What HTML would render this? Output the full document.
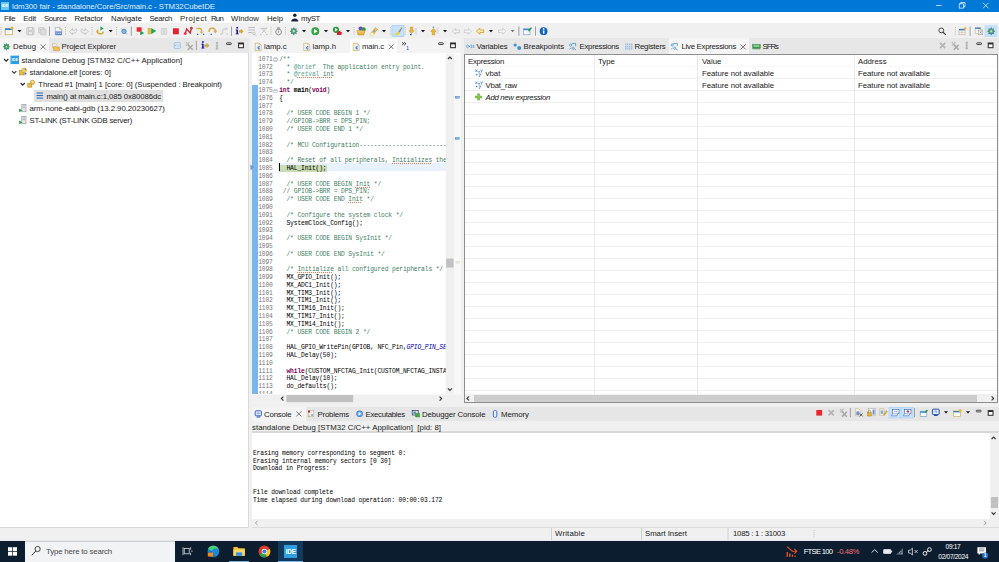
<!DOCTYPE html>
<html><head><meta charset="utf-8"><title>STM32CubeIDE</title>
<style>
*{box-sizing:border-box;margin:0;padding:0}
html,body{width:999px;height:562px;overflow:hidden;background:#f0f0f0;font-family:"Liberation Sans",sans-serif;font-size:7.8px;color:#1a1a1a}
.a{position:absolute;white-space:pre}
.t{position:absolute;white-space:pre;line-height:10px;height:10px}
#title{left:0;top:0;width:999px;height:12px;background:#0078d7}
#menu{left:0;top:12px;width:999px;height:11px;background:#fff}
#menu .t{top:1.6px;font-size:7.8px}
#tool{left:0;top:23px;width:999px;height:15px;background:#f0f0f0}
.tabbar{background:#e7e7e7;height:15.6px}
.tab{position:absolute;top:0;height:15px;background:#f6f6f6}
.panel{background:#fff;border:1px solid #b9b9b9}
.mono{font-family:"Liberation Mono",monospace}

#code{white-space:normal;font-family:"Liberation Mono",monospace;font-size:6.3px;letter-spacing:-0.14px;color:#000}
.ln{position:relative;height:7.81px;line-height:7.81px;white-space:pre}
.no{position:absolute;left:6.5px;color:#787878}
.cd{position:absolute;left:27.5px}
.fold{position:absolute;left:21.5px;top:1.7px;width:4.6px;height:4.6px;background:#c4ccd8;border-radius:2.3px}.fold:after{content:"";position:absolute;left:1px;top:1.9px;width:2.6px;height:0.8px;background:#f8f8ff}
.c{color:#3f7f5f}.ct{color:#5f9f8f}.k{color:#7f0055;font-weight:bold}.b{font-weight:bold}.e{color:#0000c0;font-style:italic}
.ip{background:#c9dcb3}
.sq{text-decoration:underline dotted #f07850;text-decoration-thickness:0.8px;text-underline-offset:0.7px}
#ctx{font-family:"Liberation Mono",monospace;font-size:6.3px;letter-spacing:-0.14px;line-height:7.81px;color:#000}
</style></head><body>
<!-- TITLE BAR -->
<div class="a" id="title">
 <div class="a" style="left:1px;top:2px;width:8px;height:8px;background:#6cc4f0;color:#fff;font-size:4px;line-height:8px;text-align:center;font-weight:bold">IDE</div>
 <div class="t" style="left:12.0px;top:1.9px;color:#e2eefb;letter-spacing:-0.044px">ldm300 fair - standalone/Core/Src/main.c - STM32CubeIDE</div>
</div>
<!-- MENU -->
<div class="a" id="menu">
 <div class="t" style="left:4.0px;letter-spacing:-0.320px">File</div>
 <div class="t" style="left:23.2px;letter-spacing:-0.159px">Edit</div>
 <div class="t" style="left:44.0px;letter-spacing:-0.370px">Source</div>
 <div class="t" style="left:74.5px;letter-spacing:-0.121px">Refactor</div>
 <div class="t" style="left:111.0px;letter-spacing:0.027px">Navigate</div>
 <div class="t" style="left:149.5px;letter-spacing:-0.370px">Search</div>
 <div class="t" style="left:180.0px;letter-spacing:0.388px">Project</div>
 <div class="t" style="left:211.0px;letter-spacing:-0.771px">Run</div>
 <div class="t" style="left:231.0px;letter-spacing:0.044px">Window</div>
 <div class="t" style="left:267.0px;letter-spacing:-0.012px">Help</div>
 <div class="t" style="left:301.0px;letter-spacing:-0.340px">myST</div>
</div>
<!-- TOOLBAR -->
<div class="a" id="tool"></div>

<!-- TOOLBAR ICONS -->
<svg class="a" style="left:0;top:0" width="999" height="40" viewBox="0 0 999 40">
<defs>
<path id="dd" d="M-2 -1.1h4l-2 2.2z"/>
<g id="dsep"><rect x="-0.5" y="27" width="1" height="1" /><rect x="-0.5" y="29.2" width="1" height="1"/><rect x="-0.5" y="31.4" width="1" height="1"/><rect x="-0.5" y="33.6" width="1" height="1"/></g>
<g id="bug"><path d="M0-4.2L1 -2.4L3-3L2.4-1L4.2 0L2.4 1L3 3L1 2.4L0 4.2L-1 2.4L-3 3L-2.4 1L-4.2 0L-2.4-1L-3-3L-1-2.4Z" fill="#3a7f8c"/><circle r="2.2" fill="#5aa878"/><circle r="1.1" fill="#d0e890"/></g>
</defs>
<!-- window controls -->
<g stroke="#fff" stroke-width="0.7" fill="none">
<path d="M936 5.5h5.4"/>
<rect x="959.2" y="3.8" width="4.3" height="4.3"/><path d="M960.6 3.8v-1.3h4.4v4.4h-1.5"/>
<path d="M983 2.8l5.6 5.6M988.6 2.8l-5.6 5.6"/>
</g>
<!-- myST person -->
<circle cx="294.8" cy="15.2" r="1.7" fill="#16224a"/><path d="M291.2 21.4c0-4 7.2-4 7.2 0z" fill="#16224a"/>
<!-- handle dots -->
<g fill="#c8b89a"><use href="#dsep" x="1"/><use href="#dsep" x="65.5"/><use href="#dsep" x="92"/><use href="#dsep" x="116.5"/><use href="#dsep" x="271"/><use href="#dsep" x="285.5"/><use href="#dsep" x="354"/><use href="#dsep" x="390.3"/><use href="#dsep" x="405.3"/><use href="#dsep" x="955.3"/></g>
<!-- vertical separators -->
<g fill="#a0a0a0"><rect x="49" y="26.5" width="1" height="9.3"/><rect x="130.8" y="26.5" width="1" height="9.3"/><rect x="231" y="26.5" width="1" height="9.3"/><rect x="518.4" y="26.5" width="1" height="9.3"/><rect x="535" y="26.5" width="1" height="9.3"/><rect x="969.6" y="26.5" width="1" height="9.3"/></g>
<!-- dropdowns -->
<g fill="#111"><use href="#dd" x="19.5" y="31.2"/><use href="#dd" x="110.7" y="31.2"/><use href="#dd" x="304" y="31.2"/><use href="#dd" x="326" y="31.2"/><use href="#dd" x="348" y="31.2"/><use href="#dd" x="384" y="31.2"/><use href="#dd" x="423" y="31.2"/><use href="#dd" x="445" y="31.2"/><use href="#dd" x="491" y="31.2"/></g>
<use href="#dd" x="512.6" y="31.2" fill="#777"/>
<!-- new -->
<rect x="5.2" y="28.3" width="7.4" height="6.5" fill="#fdfdf6" stroke="#c9a64a" stroke-width="0.7"/><rect x="5.2" y="28.3" width="7.4" height="1.8" fill="#3a7fd0"/><circle cx="12" cy="28" r="1.6" fill="#e8b93c"/>
<!-- save / save all (disabled) -->
<g fill="#dcdcdc" stroke="#bdbdbd" stroke-width="0.6"><rect x="26.6" y="27.6" width="7.4" height="7.2" rx="0.8"/><rect x="28.3" y="27.6" width="4" height="2.6" fill="#ececec"/><rect x="28.3" y="31.8" width="4" height="3" fill="#ececec"/>
<rect x="38.6" y="27.4" width="5.6" height="5.6" rx="0.8"/><rect x="40.4" y="29.2" width="5.6" height="5.6" rx="0.8"/></g>
<!-- doc 010 -->
<path d="M55.4 27.4h4.4l2 2v5.6h-6.4z" fill="#eef3fb" stroke="#8aa0c4" stroke-width="0.6"/><rect x="55.4" y="31.4" width="6.4" height="3.6" fill="#5f84c4"/><path d="M56.2 33.2h4.8" stroke="#e8eefa" stroke-width="1" stroke-dasharray="1.2 0.6"/><path d="M59.8 27.4v2h2" fill="#e8c060" stroke="#c9a64a" stroke-width="0.4"/>
<!-- undo / redo (disabled outlines) -->
<g fill="none" stroke="#b8b8b8" stroke-width="0.7"><path d="M69.5 31.5l3-3v1.8h2.2l1.2-1.6 1.2 1.3-1.6 3h-3v1.6z"/><path d="M88.2 31.5l-3-3v1.8h-2.2l-1.2-1.6-1.2 1.3 1.6 3h3v1.6z"/></g>
<!-- relaunch -->
<path d="M100.4 26.4l3.4 2-3.4 2z" fill="#21a04a"/><path d="M97 31c0 3.6 6.4 3.6 6.4 0.6" fill="none" stroke="#d9a93f" stroke-width="1.5"/><path d="M96 31.6l1.6-2.4 1.6 2.4z" fill="#d9a93f"/>
<!-- skip bp -->
<circle cx="124" cy="31.4" r="2.2" fill="#8fc0ea" stroke="#3f86c8" stroke-width="0.9"/><path d="M121.2 28.4l5.8 6" stroke="#8a8a9a" stroke-width="0.7"/>
<!-- terminate+relaunch -->
<rect x="136.7" y="27.3" width="4.9" height="4.4" fill="#e8262d"/><path d="M140.2 30.8l4 2.2-4 2.2z" fill="#21a04a"/>
<!-- resume -->
<rect x="148" y="28.2" width="2.4" height="5.8" fill="#e8c040" stroke="#b8952e" stroke-width="0.4"/><path d="M151.2 28l5 3.1-5 3.1z" fill="#2ca04a"/>
<!-- suspend disabled -->
<g fill="#e4e4e4" stroke="#c4c4c4" stroke-width="0.5"><rect x="161.2" y="28.3" width="2.2" height="6"/><rect x="164.6" y="28.3" width="2.2" height="6"/></g>
<!-- terminate -->
<rect x="173" y="28.3" width="5.8" height="6" fill="#e8202a"/>
<!-- disconnect -->
<path d="M185.4 33.4l1.2-4.6 3.6 4.4 1.2-4.8" fill="none" stroke="#d8202c" stroke-width="1.3"/><circle cx="185.2" cy="33.6" r="1.4" fill="#e03040"/><circle cx="191.4" cy="28.2" r="1.4" fill="#e03040"/>
<!-- step into -->
<path d="M196.4 28.6h3.4c1.6 0 1.8 1.4 1.8 3" fill="none" stroke="#d8ae58" stroke-width="1.5"/><path d="M199.4 31.4h4.4l-2.2 2.4z" fill="#d8ae58"/><rect x="197" y="33.7" width="1.3" height="1.2" fill="#3a68b8"/><rect x="203" y="33.7" width="1.3" height="1.2" fill="#3a68b8"/>
<!-- step over -->
<path d="M209 32c0-5 6.4-5 6.4-1" fill="none" stroke="#d8ae58" stroke-width="1.6"/><path d="M213.2 30.8h4.2l-2.1 2.6z" fill="#d8ae58"/><rect x="210.6" y="33.7" width="1.3" height="1.2" fill="#3a68b8"/>
<!-- step return disabled -->
<path d="M222.6 34v-3.2c0-1.4 1.2-2 2.6-2h1" fill="none" stroke="#cfcfcf" stroke-width="1.3"/><path d="M225.6 27l2.4 1.8-2.4 1.8z" fill="#cfcfcf"/><rect x="220.4" y="33.6" width="1.2" height="1.2" fill="#b8b8b8"/><rect x="226.4" y="33.6" width="1.2" height="1.2" fill="#b8b8b8"/>
<!-- i => -->
<g id="iarrow"><rect x="236.4" y="29.6" width="1.6" height="4.4" fill="#1c1ca0"/><rect x="235.7" y="33.4" width="3" height="0.9" fill="#1c1ca0"/><rect x="235.7" y="29.6" width="1.6" height="0.8" fill="#1c1ca0"/><circle cx="237.2" cy="27.8" r="0.95" fill="#1c1ca0"/><path d="M239 30.6h2v-1.4l2.4 2.2-2.4 2.2v-1.4h-2z" fill="#d8b030" stroke="#a88420" stroke-width="0.3"/></g>
<!-- gray list icons -->
<g stroke="#b4b4b4" stroke-width="0.7" fill="none"><path d="M248.2 27.5h6.8M248.2 30h6.8M248.2 32.5h4" stroke-width="0.9"/><circle cx="254" cy="33.4" r="1.3" fill="#f0f0f0"/><path d="M255 34.4l1.2 1.2" /><path d="M260 34.4h1.6M266 34.4h1.6M260.6 28.4h6.2M262 33l5-5.6M262.4 29l3.6 4"/></g>
<!-- watch -->
<circle cx="278.6" cy="32" r="2.9" fill="#ececec" stroke="#808080" stroke-width="0.8"/><path d="M277.4 27.6h2.4v1.4h-2.4z" fill="#bbb" stroke="#777" stroke-width="0.4"/><path d="M278.6 30.4v1.8l-1 1" stroke="#666" stroke-width="0.5" fill="none"/>
<!-- debug bug -->
<use href="#bug" x="293.8" y="31.2"/>
<!-- run -->
<circle cx="315.3" cy="31.2" r="3.9" fill="#2c9a3c"/><circle cx="315.3" cy="31.2" r="3.2" fill="#38a848"/><path d="M314 28.8l3.6 2.4-3.6 2.4z" fill="#fff"/>
<!-- ext tools -->
<circle cx="336" cy="29.8" r="3.1" fill="#2c9a3c"/><path d="M335 28l2.8 1.8-2.8 1.8z" fill="#fff"/><rect x="337" y="31.8" width="4.6" height="3.2" rx="0.5" fill="#d8202c"/><rect x="338.4" y="30.9" width="1.8" height="1" fill="#b01820"/>
<!-- folder -->
<circle cx="360.6" cy="28.6" r="2.1" fill="#6a4fb0"/><circle cx="363.6" cy="29.4" r="2.1" fill="#2c9448"/><path d="M357 30.4h8l-1.2 4.6h-5.8z" fill="#e8b84a" stroke="#b88a28" stroke-width="0.5"/><path d="M357.4 31.8h6.8" stroke="#f6dc90" stroke-width="0.7"/>
<!-- flashlight -->
<path d="M370 34.6l5.4-7 2.2 1.6-5.4 7z" fill="#e8c060" stroke="#c09838" stroke-width="0.5"/><path d="M370 34.6l1.8-2.2 2.2 1.6-1.8 2.2z" fill="#fff6d0"/><circle cx="374.2" cy="31" r="1" fill="#9098b0"/>
<!-- highlighted brush -->
<rect x="391.9" y="25.4" width="12.1" height="11.2" fill="#c5e1fb" stroke="#9ccdf7" stroke-width="0.6"/><path d="M401.6 27.2l0.8 0.6-2.6 5-1.6-1z" fill="#9a9078"/><path d="M393.6 34.8c2.4 0 3-2.4 4.6-3l1.6 1c-0.6 2-3.4 2.8-6.2 2z" fill="#f2d21c"/>
<!-- next / prev annotation -->
<path d="M410.2 27h2.6v3.6h1.4l-2.7 3.2-2.7-3.2h1.4z" fill="#e8b83c" stroke="#b88a20" stroke-width="0.4"/><rect x="414.6" y="28" width="2.4" height="6.6" fill="#dcdfe6"/><rect x="410" y="34" width="1.6" height="1.2" fill="#2a5fb0"/>
<path d="M432.2 35h2.6v-3.6h1.4l-2.7-3.2-2.7 3.2h1.4z" fill="#e8b83c" stroke="#b88a20" stroke-width="0.4"/><rect x="436.4" y="27.4" width="2.4" height="6.6" fill="#dcdfe6"/><rect x="432.6" y="26.6" width="1.6" height="1.2" fill="#6a90d0"/>
<!-- nav arrows -->
<g fill="#f4f4f4" stroke="#bcbcbc" stroke-width="0.6"><path d="M452.4 31.2l3-2.6v1.5h4v2.6h-4v1.5z"/><path d="M471.4 31.2l-3-2.6v1.5h-4v2.6h4v1.5z"/><path d="M506 31.2l-3.2-2.8v1.6h-4.2v2.6h4.2v1.6z"/></g>
<path d="M476.4 31.2l3.4-3v1.7h4v2.6h-4v1.7z" fill="#fbeeb0" stroke="#dc9c20" stroke-width="0.8"/>
<!-- pin editor -->
<rect x="523.4" y="28.8" width="6.6" height="6" fill="#f4f8fd" stroke="#7a9cc8" stroke-width="0.6"/><rect x="523.4" y="28.8" width="6.6" height="1.4" fill="#4a86d0"/><path d="M528 30.8l2.8-3.6 1.2 0.9-2.8 3.6z" fill="#2a9a48"/>
<!-- info -->
<circle cx="543.6" cy="31.2" r="3.9" fill="#1464b4"/><rect x="542.9" y="30.4" width="1.5" height="3.2" fill="#fff"/><circle cx="543.6" cy="28.9" r="0.85" fill="#fff"/>
<!-- search -->
<circle cx="941.3" cy="30.4" r="2.4" fill="none" stroke="#333" stroke-width="0.9"/><path d="M943 32.2l2.8 2.6" stroke="#333" stroke-width="1.1"/>
<!-- perspective icons -->
<rect x="959" y="29" width="6" height="5.8" fill="#fbfbf4" stroke="#b8a070" stroke-width="0.5"/><rect x="959" y="29" width="6" height="1.4" fill="#3a7fd0"/><path d="M962 30.4v4.4M959 32.4h6" stroke="#b8a070" stroke-width="0.4"/><circle cx="965" cy="28.6" r="1.4" fill="#e8b93c"/>
<rect x="975.2" y="27.6" width="5.4" height="5.6" fill="#fbfbf4" stroke="#b8a070" stroke-width="0.5"/><rect x="975.2" y="27.6" width="5.4" height="1.3" fill="#3a7fd0"/><rect x="978.4" y="30" width="4.4" height="4.8" fill="#eef3fb" stroke="#a89060" stroke-width="0.5"/><path d="M981.6 31.2l-1.6 1.2 1.6 1.2" stroke="#3a6fc0" stroke-width="0.6" fill="none"/>
<rect x="985" y="25.4" width="12" height="11.4" fill="#c5e1fb" stroke="#b5d8f8" stroke-width="0.5"/><use href="#bug" x="991.2" y="31.3"/>
</svg>

<!-- LEFT PANEL -->
<div class="a tabbar" style="left:0;top:38.1px;width:248.8px;height:15px"></div>
<div class="a" style="left:0;top:38.4px;width:48.8px;height:15px;background:#f6f6f6"></div>
<div class="t" style="left:13.0px;top:42.3px;letter-spacing:0.003px">Debug</div>
<div class="t" style="left:61.5px;top:42.3px;letter-spacing:-0.061px">Project Explorer</div>
<div class="a" style="left:0;top:53.4px;width:249.3px;height:474.2px;background:#fff;border-right:0.8px solid #dadada;border-bottom:0.8px solid #dadada"></div>
<div class="a" style="left:34.2px;top:90.3px;width:128.5px;height:11.5px;background:#e0e0e0"></div>
<div class="t" style="left:21.4px;top:55.7px;letter-spacing:0.033px">standalone Debug [STM32 C/C++ Application]</div>
<div class="t" style="left:29.5px;top:67.7px;letter-spacing:-0.060px">standalone.elf [cores: 0]</div>
<div class="t" style="left:38.3px;top:79.7px;letter-spacing:-0.052px">Thread #1 [main] 1 [core: 0] (Suspended : Breakpoint)</div>
<div class="t" style="left:46.4px;top:91.7px;letter-spacing:-0.103px">main() at main.c:1,085 0x80086dc</div>
<div class="t" style="left:29.5px;top:103.7px;letter-spacing:-0.035px">arm-none-eabi-gdb (13.2.90.20230627)</div>
<div class="t" style="left:29.5px;top:115.7px;letter-spacing:-0.239px">ST-LINK (ST-LINK GDB server)</div>
<!-- EDITOR -->
<div class="a tabbar" style="left:251.7px;top:38.4px;width:209.3px;background:#f3f3f3;height:15px"></div>
<div class="a" style="left:349.8px;top:38.8px;width:47.6px;height:15px;background:#fff"></div>
<div class="t" style="left:264.0px;top:42.3px;letter-spacing:-0.078px">lamp.c</div>
<div class="t" style="left:312.5px;top:42.3px;letter-spacing:0.016px">lamp.h</div>
<div class="t" style="left:362.0px;top:42.3px;letter-spacing:-0.161px">main.c</div>
<div class="a" id="ed" style="left:251.7px;top:53.4px;width:209.3px;height:350px;background:#fff;overflow:hidden">

<div class="a" style="left:0.3px;top:31.6px;width:5.8px;height:309.4px;background:#7cb5ea"></div>
<div class="a" style="left:27.5px;top:109.9px;width:166.5px;height:7.8px;background:#e8f2fe"></div>
<div class="a" style="left:27.5px;top:110px;width:0.9px;height:7.6px;background:#000;z-index:3"></div>
<div class="a" id="code" style="left:0;top:2.4px;width:194px;height:338.6px;overflow:hidden">
<div class="ln"><span class="no">1071</span><i class="fold"></i><span class="cd"><span class="c">/**</span></span></div>
<div class="ln"><span class="no">1072</span><span class="cd"><span class="c">  * </span><span class="ct">@brief</span><span class="c">  The application entry point.</span></span></div>
<div class="ln"><span class="no">1073</span><span class="cd"><span class="c">  * </span><span class="ct">@</span><span class="ct sq">retval</span><span class="c sq"> int</span></span></div>
<div class="ln"><span class="no">1074</span><span class="cd"><span class="c">  */</span></span></div>
<div class="ln"><span class="no">1075</span><i class="fold"></i><span class="cd"><span class="k">int</span> <span class="b">main</span>(<span class="k">void</span>)</span></div>
<div class="ln"><span class="no">1076</span><span class="cd">{</span></div>
<div class="ln"><span class="no">1077</span><span class="cd"></span></div>
<div class="ln"><span class="no">1078</span><span class="cd"><span class="c">  /* USER CODE BEGIN 1 */</span></span></div>
<div class="ln"><span class="no">1079</span><span class="cd"><span class="c">  //GPIOB-&gt;BRR = DPS_PIN;</span></span></div>
<div class="ln"><span class="no">1080</span><span class="cd"><span class="c">  /* USER CODE END 1 */</span></span></div>
<div class="ln"><span class="no">1081</span><span class="cd"></span></div>
<div class="ln"><span class="no">1082</span><span class="cd"><span class="c">  /* MCU Configuration--------------------------------------------------------*/</span></span></div>
<div class="ln"><span class="no">1083</span><span class="cd"></span></div>
<div class="ln"><span class="no">1084</span><span class="cd"><span class="c">  /* Reset of all peripherals, </span><span class="c sq">Initializes</span><span class="c"> the Flash interface and the Systick. */</span></span></div>
<div class="ln"><span class="no">1085</span><span class="cd"><span class="ip">  HAL_Init();</span></span></div>
<div class="ln"><span class="no">1086</span><span class="cd"></span></div>
<div class="ln"><span class="no">1087</span><span class="cd"><span class="c">  /* USER CODE BEGIN </span><span class="c sq">Init</span><span class="c"> */</span></span></div>
<div class="ln"><span class="no">1088</span><span class="cd"><span class="c"> // GPIOB-&gt;BRR = DPS_PIN;</span></span></div>
<div class="ln"><span class="no">1089</span><span class="cd"><span class="c">  /* USER CODE END </span><span class="c sq">Init</span><span class="c"> */</span></span></div>
<div class="ln"><span class="no">1090</span><span class="cd"></span></div>
<div class="ln"><span class="no">1091</span><span class="cd"><span class="c">  /* Configure the system clock */</span></span></div>
<div class="ln"><span class="no">1092</span><span class="cd">  SystemClock_Config();</span></div>
<div class="ln"><span class="no">1093</span><span class="cd"></span></div>
<div class="ln"><span class="no">1094</span><span class="cd"><span class="c">  /* USER CODE BEGIN SysInit */</span></span></div>
<div class="ln"><span class="no">1095</span><span class="cd"></span></div>
<div class="ln"><span class="no">1096</span><span class="cd"><span class="c">  /* USER CODE END SysInit */</span></span></div>
<div class="ln"><span class="no">1097</span><span class="cd"></span></div>
<div class="ln"><span class="no">1098</span><span class="cd"><span class="c">  /* </span><span class="c sq">Initialize</span><span class="c"> all configured peripherals */</span></span></div>
<div class="ln"><span class="no">1099</span><span class="cd">  MX_GPIO_Init();</span></div>
<div class="ln"><span class="no">1100</span><span class="cd">  MX_ADC1_Init();</span></div>
<div class="ln"><span class="no">1101</span><span class="cd">  MX_TIM3_Init();</span></div>
<div class="ln"><span class="no">1102</span><span class="cd">  MX_TIM1_Init();</span></div>
<div class="ln"><span class="no">1103</span><span class="cd">  MX_TIM16_Init();</span></div>
<div class="ln"><span class="no">1104</span><span class="cd">  MX_TIM17_Init();</span></div>
<div class="ln"><span class="no">1105</span><span class="cd">  MX_TIM14_Init();</span></div>
<div class="ln"><span class="no">1106</span><span class="cd"><span class="c">  /* USER CODE BEGIN 2 */</span></span></div>
<div class="ln"><span class="no">1107</span><span class="cd"></span></div>
<div class="ln"><span class="no">1108</span><span class="cd">  HAL_GPIO_WritePin(GPIOB, NFC_Pin,<span class="e">GPIO_PIN_SET</span>);</span></div>
<div class="ln"><span class="no">1109</span><span class="cd">  HAL_Delay(50);</span></div>
<div class="ln"><span class="no">1110</span><span class="cd"></span></div>
<div class="ln"><span class="no">1111</span><span class="cd">  <span class="k">while</span>(CUSTOM_NFCTAG_Init(CUSTOM_NFCTAG_INSTANCE) != NFCTAG_OK);</span></div>
<div class="ln"><span class="no">1112</span><span class="cd">  HAL_Delay(10);</span></div>
<div class="ln"><span class="no">1113</span><span class="cd">  do_defaults();</span></div>
<div class="ln"><span class="no">1114</span><span class="cd">  </span></div>
</div>
</div>
<div class="t" style="left:406px;top:43px;font-size:5.5px;color:#3a5a9a">1</div>
<!-- RIGHT PANEL -->
<div class="a tabbar" style="left:463.6px;top:38.1px;width:535.4px;height:16px"></div>
<div class="a" style="left:669px;top:38.4px;width:80px;height:15.6px;background:#f6f6f6"></div>
<div class="t" style="left:476.5px;top:42.3px;letter-spacing:-0.104px">Variables</div>
<div class="t" style="left:523.5px;top:42.3px;letter-spacing:-0.062px">Breakpoints</div>
<div class="t" style="left:579.5px;top:42.3px;letter-spacing:-0.270px">Expressions</div>
<div class="t" style="left:634.5px;top:42.3px;letter-spacing:-0.215px">Registers</div>
<div class="t" style="left:681.5px;top:42.3px;letter-spacing:-0.277px">Live Expressions</div>
<div class="t" style="left:762.5px;top:42.3px;letter-spacing:-1.000px">SFRs</div>
<div class="a" id="tbl" style="left:464px;top:54px;width:534.2px;height:349.3px;background:#fff;border:1px solid #8e8e8e;overflow:hidden">
<div class="a" style="left:0;top:0;width:533px;height:339px;background-image:linear-gradient(180deg,rgba(255,255,255,0) 11px,#f0f0f0 11px,#f0f0f0 12px);background-size:100% 12px"></div>
<div class="a" style="left:128.8px;top:0;width:1px;height:339px;background:#ebebeb"></div>
<div class="a" style="left:232.4px;top:0;width:1px;height:339px;background:#ebebeb"></div>
<div class="a" style="left:388.8px;top:0;width:1px;height:339px;background:#ebebeb"></div><div class="a" style="left:0;top:11px;width:533px;height:1px;background:rgba(255,255,255,0.55)"></div>
<div class="t" style="left:3.0px;top:1.6px;letter-spacing:-0.258px">Expression</div>
<div class="t" style="left:133px;top:1.6px">Type</div>
<div class="t" style="left:237px;top:1.6px">Value</div>
<div class="t" style="left:393px;top:1.6px">Address</div>
<div class="t" style="left:20.5px;top:13.6px;letter-spacing:0.062px">vbat</div>
<div class="t" style="left:237px;top:13.6px;letter-spacing:-0.039px">Feature not available</div>
<div class="t" style="left:393px;top:13.6px;letter-spacing:-0.039px">Feature not available</div>
<div class="t" style="left:20.5px;top:25.6px;letter-spacing:-0.182px">Vbat_raw</div>
<div class="t" style="left:237px;top:25.6px;letter-spacing:-0.039px">Feature not available</div>
<div class="t" style="left:393px;top:25.6px;letter-spacing:-0.039px">Feature not available</div>
<div class="t" style="left:20.5px;top:37.6px;font-style:italic;letter-spacing:-0.318px">Add new expression</div>
<div class="a" style="left:0;top:339px;width:533px;height:9px;background:#f0f0f0"></div>
<div class="a" style="left:8.5px;top:339.6px;width:503px;height:7.6px;background:#cdcdcd"></div>
</div>
<!-- CONSOLE -->
<div class="a" style="left:251.5px;top:406.6px;width:747.5px;height:14.6px;background:#e6e6e6"></div>
<div class="a" style="left:251.5px;top:406.6px;width:54px;height:14.6px;background:#f4f4f4"></div>
<div class="a" style="left:251.5px;top:431.4px;width:747.5px;height:1.4px;background:#d8d8d8"></div>
<div class="t" style="left:264.0px;top:410px;letter-spacing:-0.158px">Console</div>
<div class="t" style="left:317.5px;top:410px;letter-spacing:-0.180px">Problems</div>
<div class="t" style="left:365.5px;top:410px;letter-spacing:-0.271px">Executables</div>
<div class="t" style="left:422.0px;top:410px;letter-spacing:-0.096px">Debugger Console</div>
<div class="t" style="left:501.0px;top:410px;letter-spacing:-0.029px">Memory</div>
<div class="t" style="left:252.0px;top:422.7px;letter-spacing:0.034px">standalone Debug [STM32 C/C++ Application]  [pid: 8]</div>
<div class="a" id="con" style="left:251.7px;top:432.8px;width:747.3px;height:86.2px;background:#fff;overflow:hidden">
<pre class="a" id="ctx" style="left:1.3px;top:1.4px">


Erasing memory corresponding to segment 0:
Erasing internal memory sectors [0 30]
Download in Progress:


File download complete
Time elapsed during download operation: 00:00:03.172
</pre>
<div class="a" style="left:738.3px;top:0;width:9px;height:87px;background:#f0f0f0"></div>
<div class="a" style="left:739.3px;top:64px;width:7px;height:11.5px;background:#c1c1c1"></div>
</div>
<!-- BODY ICONS -->
<svg class="a" style="left:0;top:0;z-index:5" width="999" height="541" viewBox="0 0 999 541">
<defs>
<g id="min"><rect x="0.3" y="0.2" width="4.8" height="1.7" rx="0.6" fill="#e8e8e8" stroke="#333" stroke-width="0.9"/></g>
<g id="max"><rect x="0.4" y="0.4" width="4.8" height="4.7" fill="#fafafa" stroke="#2a2a2a" stroke-width="1"/><rect x="0.4" y="0.4" width="4.8" height="1.4" fill="#2a2a2a"/></g>
<g id="chev"><path d="M-2.1 -1l2.1 2.1l2.1-2.1" fill="none" stroke="#2a2a2a" stroke-width="1.15"/></g>
<g id="cfile"><path d="M0 0h4l2 2v5.4h-6z" fill="#fdfbf2" stroke="#c8aa64" stroke-width="0.7"/><path d="M4 0v2h2" fill="none" stroke="#c8aa64" stroke-width="0.5"/><rect x="1" y="2.6" width="4.4" height="4" fill="#d8e6f8"/><path d="M4.5 3.6c-2.2-0.9-2.2 3 0 2.1" fill="none" stroke="#2a5ab8" stroke-width="1"/></g>
<g id="gx"><path d="M-2.6-2.6l5.2 5.2M2.6-2.6l-5.2 5.2" stroke="#b6b6b6" stroke-width="1.9"/></g>
<g id="gxx"><path d="M-3.4-3.6l3.6 3.6M0.2-3.6l-3.6 3.6" stroke="#bdbdbd" stroke-width="1.1"/><path d="M-1.4-0.8l4.8 4.8M3.4-0.8l-4.8 4.8" stroke="#a8a8a8" stroke-width="1.5"/></g>
<g id="xy"><path d="M0 0l2 2.4M2 0l-2 2.4M5 0l1.2 1.6 1.2-1.6M6.2 1.6v1.4M0.4 5h1.6M1.2 4.2v1.6M3.2 4.4h2l-1.4 3M3 2.2h1.4M3.7 1.5v1.4" fill="none" stroke="#3a7fc8" stroke-width="0.75"/></g>
<g id="srv"><rect x="2.6" y="0" width="4.2" height="7.4" fill="#e4e6e8" stroke="#8a9094" stroke-width="0.6"/><path d="M3.6 1.6h2.2M3.6 3.2h2.2" stroke="#7a8084" stroke-width="0.5"/><path d="M0 4.2l3.2 1.8-3.2 1.8z" fill="#2a9a48"/></g>
<g id="ddb"><path d="M-2 -1.1h4l-2 2.2z" fill="#111"/></g>
</defs>
<!-- left tab bar -->
<g transform="translate(6.5 46.8)"><path d="M0-3.8L0.9-2.2L2.7-2.7L2.2-0.9L3.8 0L2.2 0.9L2.7 2.7L0.9 2.2L0 3.8L-0.9 2.2L-2.7 2.7L-2.2 0.9L-3.8 0L-2.2-0.9L-2.7-2.7L-0.9-2.2Z" fill="#2f8f86"/><circle r="1.9" fill="#4aa04a"/><circle r="0.9" fill="#d8e860"/></g>
<path d="M40.6 44.4l5 5M45.6 44.4l-5 5" stroke="#444" stroke-width="0.7"/>
<path d="M52.6 43.6h3l1.2 1.2v3h-4.2z" fill="#f4f0e4" stroke="#b8a888" stroke-width="0.5"/><path d="M53.6 46.4h2l0.8 0.8h3v3.4h-5.8z" fill="#f0c050" stroke="#c09030" stroke-width="0.5"/>
<rect x="174.3" y="42.6" width="6" height="5.8" rx="0.6" fill="#dcebfa" stroke="#8ab4e0" stroke-width="0.7"/><rect x="175.6" y="45" width="3.4" height="1" fill="#fff" stroke="#6a9ad0" stroke-width="0.3"/>
<use href="#gxx" x="189.3" y="45.8"/>
<rect x="195.9" y="40.6" width="0.9" height="9.6" fill="#9a9a9a"/>
<g transform="translate(-34.3 14.2)"><rect x="236.4" y="29.6" width="1.6" height="4.4" fill="#1c1ca0"/><rect x="235.7" y="33.4" width="3" height="0.9" fill="#1c1ca0"/><rect x="235.7" y="29.6" width="1.6" height="0.8" fill="#1c1ca0"/><circle cx="237.2" cy="27.8" r="0.95" fill="#1c1ca0"/><path d="M239 30.6h2v-1.4l2.4 2.2-2.4 2.2v-1.4h-2z" fill="#d8b030" stroke="#a88420" stroke-width="0.3"/></g>
<g fill="#b8b8b8" stroke="#a0a0a0" stroke-width="0.4"><circle cx="217" cy="43" r="1"/><circle cx="217" cy="45.7" r="1"/><circle cx="217" cy="48.4" r="1"/></g>
<use href="#min" x="226.2" y="42.6"/><use href="#max" x="238.2" y="42.6"/>
<!-- tree icons -->
<use href="#chev" x="6.2" y="60"/><use href="#chev" x="14.2" y="72.2"/><use href="#chev" x="22.7" y="84"/>
<rect x="10.5" y="55.6" width="8.5" height="8.5" fill="#2aa0e4"/>
<text x="14.75" y="61.4" font-family="Liberation Sans, sans-serif" font-weight="bold" font-size="3.9" fill="#fff" text-anchor="middle">IDE</text>
<rect x="19.4" y="70.4" width="4.6" height="4.6" fill="#e8b840" stroke="#b08820" stroke-width="0.5"/><circle cx="24" cy="70.4" r="2.4" fill="#f0d060" stroke="#b89028" stroke-width="0.5"/><path d="M24.6 72.4l2.4 1.2-2.4 1.6z" fill="#3a6fc0"/><circle cx="25.6" cy="69.2" r="0.8" fill="#3a6fc0"/>
<rect x="27.8" y="83.2" width="4" height="4" fill="#e8b840" stroke="#b08820" stroke-width="0.5"/><circle cx="32.4" cy="82.4" r="2.2" fill="#e8c050" stroke="#a88020" stroke-width="0.5"/><circle cx="32.6" cy="82.2" r="0.8" fill="#fff8d0"/>
<g fill="#2a6fc0"><rect x="36.6" y="92.5" width="6.4" height="1.1"/><rect x="36.6" y="95" width="6.4" height="1.1"/><rect x="36.6" y="97.5" width="6.4" height="1.1"/></g>
<use href="#srv" x="19.2" y="104.4"/><use href="#srv" x="19.2" y="116.4"/>
<!-- editor tabs -->
<use href="#cfile" x="255.2" y="43.2"/><use href="#cfile" x="303.8" y="43.2"/><use href="#cfile" x="353.2" y="43.2"/>
<path d="M388.8 44.4l4.8 4.8M393.6 44.4l-4.8 4.8" stroke="#444" stroke-width="0.7"/>
<path d="M402.2 42.3l1.5 1.4-1.5 1.4M404.3 42.3l1.5 1.4-1.5 1.4" fill="none" stroke="#1a1a1a" stroke-width="0.95"/>
<use href="#min" x="438.2" y="42.6"/><use href="#max" x="450.2" y="42.6"/>
<!-- editor ruler / scrollbars -->
<path d="M250.8 165.2l2.6 2.2-2.6 2.2z" fill="#7fb0e0" stroke="#3a6ab0" stroke-width="0.5"/>
<rect x="445.7" y="53.6" width="8.4" height="341" fill="#f0f0f0"/>
<rect x="446.2" y="258.6" width="7.4" height="9" fill="#c1c1c1"/>
<path d="M447.9 59l2-2 2 2M447.9 388.4l2 2 2-2" fill="none" stroke="#3a3a3a" stroke-width="1.2"/>
<rect x="454.1" y="53.6" width="6.9" height="349.2" fill="#f8f8f8"/>
<rect x="455.2" y="96.2" width="4.2" height="2" fill="#7cb5ea" stroke="#4a8ad0" stroke-width="0.4"/><rect x="455.2" y="137.4" width="4.2" height="2" fill="#7cb5ea" stroke="#4a8ad0" stroke-width="0.4"/>
<rect x="456" y="261.2" width="3.4" height="1.8" fill="#f4f8ec" stroke="#b8d0a0" stroke-width="0.4"/>
<rect x="251.8" y="394.4" width="209.2" height="8.4" fill="#f0f0f0"/>
<rect x="286.4" y="395" width="66.8" height="7.2" fill="#c1c1c1"/>
<path d="M283.4 396.6l-2 2 2 2M439.6 396.6l2 2-2 2" fill="none" stroke="#3a3a3a" stroke-width="1.2"/>
<!-- right tabs -->
<g fill="none" stroke="#3a8ad8" stroke-width="0.8"><path d="M467.4 44.6c-0.8 1-0.8 2.6 0 3.6M471.2 44.6c0.8 1 0.8 2.6 0 3.6M468.4 45.4l1.8 2M470.2 45.4l-1.8 2M472.8 45.8h1.6M472.8 47.2h1.6"/></g>
<circle cx="515.2" cy="45" r="1.6" fill="#3f92d8"/><circle cx="519.2" cy="48" r="2" fill="#3f92d8"/>
<g id="expi" fill="none" stroke="#4a98d8" stroke-width="0.85"><circle cx="570.6" cy="45" r="1.1"/><circle cx="573.2" cy="48.2" r="1.1"/><path d="M571.6 43.8l4-0.6M575.6 43.2v3M569.6 49.4l1.2-1.6M574.6 49.4l1.4 0.4"/></g>
<use href="#expi" x="101.6"/>
<g stroke="#4a90d8" stroke-width="0.7"><path d="M625.8 43.6v6M627.8 43.6v6M629.8 43.6v6M631.8 43.6v6" stroke-dasharray="1.6 0.7"/></g>
<path d="M740.6 44.4l5 5M745.6 44.4l-5 5" stroke="#444" stroke-width="0.7"/>
<rect x="752.6" y="44.4" width="7.8" height="4.2" fill="#3a9a50" stroke="#2a7a3a" stroke-width="0.4"/><rect x="753.6" y="45.4" width="5.8" height="1.2" fill="#c8e8b0"/><path d="M753.4 49.2h6.4" stroke="#8a8a6a" stroke-width="0.6" stroke-dasharray="0.8 0.6"/>
<use href="#gx" x="942.6" y="45.5"/><use href="#gxx" x="955.2" y="45.6"/>
<g fill="#b8b8b8" stroke="#a0a0a0" stroke-width="0.4"><circle cx="966.7" cy="42.8" r="1"/><circle cx="966.7" cy="45.5" r="1"/><circle cx="966.7" cy="48.2" r="1"/></g>
<use href="#min" x="976.4" y="42.6"/><use href="#max" x="987.8" y="42.6"/>
<!-- table icons -->
<use href="#xy" x="475.4" y="69.6"/><use href="#xy" x="475.4" y="81.6"/>
<path d="M477.6 93.8h1.9v2.2h2.2v1.9h-2.2v2.2h-1.9v-2.2h-2.2v-1.9h2.2z" fill="#84c848" stroke="#58a430" stroke-width="0.5"/>
<!-- console tabs -->
<rect x="255.2" y="410.8" width="6.2" height="5" rx="0.8" fill="#dce8f8" stroke="#2a5fb8" stroke-width="0.9"/><path d="M256.8 413.2h3" stroke="#2a5fb8" stroke-width="0.6"/><rect x="256.6" y="416.4" width="3.6" height="1.1" fill="#2a5fb8"/>
<path d="M296.4 411.4l5 5M301.4 411.4l-5 5" stroke="#444" stroke-width="0.7"/>
<rect x="308.4" y="410.2" width="5.4" height="6.6" fill="#f4f4f0" stroke="#a8a8a0" stroke-width="0.5"/><rect x="308" y="410.6" width="2" height="2" fill="#e02030"/><path d="M307.6 416.8l1.4-2 1.4 2z" fill="#e8b030"/><circle cx="312" cy="415" r="0.9" fill="#6a90d0"/>
<circle cx="359.6" cy="413.8" r="3.3" fill="#3a7fd0"/><circle cx="359.6" cy="413.8" r="2.5" fill="#6aa8e8"/><path d="M358.6 412l2.8 1.8-2.8 1.8z" fill="#fff"/>
<rect x="412.2" y="410.4" width="6" height="4.6" fill="#e4e8f0" stroke="#3a4a6a" stroke-width="0.8"/><rect x="413.4" y="411.6" width="2.4" height="2.2" fill="#4a80c8"/><path d="M415.6 413.4h4v3.6h-4z" fill="#48a848" stroke="#2a7a2a" stroke-width="0.4"/>
<rect x="493.4" y="410.6" width="3.4" height="6.6" rx="1" fill="#e8f0fc" stroke="#2a6ad0" stroke-width="0.9"/>
<!-- console toolbar -->
<rect x="816.3" y="410" width="5.8" height="5.6" fill="#e8262d"/>
<use href="#gx" x="831.2" y="412.8"/><use href="#gxx" x="843.4" y="412.6"/>
<rect x="849.9" y="408" width="0.9" height="9.2" fill="#9a9a9a"/>
<path d="M855.4 408.8h3.6l1.6 1.6v5.4h-5.2z" fill="#f4f2e8" stroke="#b8a878" stroke-width="0.5"/><rect x="856.4" y="411.4" width="3" height="3.6" fill="#6a90d0"/><path d="M859.6 413.4l3 3M862.6 413.4l-3 3" stroke="#444" stroke-width="0.8"/>
<rect x="868.6" y="408.6" width="6.6" height="7.2" fill="#f4f6fa" stroke="#a8a890" stroke-width="0.5"/><rect x="872.6" y="409.6" width="2" height="5" fill="#6a90d0"/><rect x="867.4" y="412.4" width="4" height="3.6" fill="#e8b030" stroke="#a87818" stroke-width="0.4"/><path d="M868.2 412.4v-1.2c0-1.4 2.4-1.4 2.4 0v1.2" fill="none" stroke="#a87818" stroke-width="0.6"/>
<path d="M879.6 408.8h4.6v6.6h-4.6z" fill="#f4f2e8" stroke="#b8a878" stroke-width="0.5"/><rect x="880.6" y="410.4" width="2.6" height="3.4" fill="#8aa8d8"/><path d="M883.4 414.6l3-4 1 0.8-3 4z" fill="#e8b030" stroke="#a87818" stroke-width="0.3"/>
<rect x="889" y="407.2" width="24" height="10.8" fill="#c5e1fb" stroke="#9ccdf7" stroke-width="0.5"/><path d="M901 407.2v10.8" stroke="#9ccdf7" stroke-width="0.5"/>
<g id="cns"><rect x="892.6" y="409.4" width="6.4" height="4.2" fill="#f4f8fd" stroke="#3a5fa8" stroke-width="0.6"/><path d="M892.6 413.6l-1.4 2.2h5.6l1.2-2.2" fill="#dce8f8" stroke="#3a5fa8" stroke-width="0.5"/><path d="M894 411.4h3.4" stroke="#6a8ac8" stroke-width="0.6"/></g>
<use href="#cns" x="12"/><rect x="907" y="410.6" width="2" height="1.8" fill="#e02030"/>
<rect x="914.1" y="408" width="0.9" height="9.2" fill="#9a9a9a"/>
<rect x="920.2" y="411.4" width="6.6" height="5" fill="#f4f8fd" stroke="#6a90c8" stroke-width="0.6"/><rect x="920.2" y="411.4" width="6.6" height="1.3" fill="#3a7fd0"/><path d="M924.4 412l2.4-2.6 1.2 1-2.4 2.6z" fill="#2a9a48"/>
<rect x="932.4" y="409.2" width="6.8" height="5.4" rx="0.8" fill="#dce8f8" stroke="#2a4fa8" stroke-width="1"/><path d="M934.4 411.2h2v1.6" stroke="#3a5fa8" stroke-width="0.5" fill="none"/><rect x="934" y="415" width="3.6" height="1" fill="#2a4fa8"/>
<use href="#ddb" x="946" y="412.4"/>
<rect x="953.4" y="411" width="7" height="5.4" fill="#fdfdf4" stroke="#c9a64a" stroke-width="0.6"/><rect x="953.4" y="411" width="7" height="1.4" fill="#3a7fd0"/><circle cx="960.2" cy="410.4" r="1.5" fill="#e8b93c"/>
<use href="#ddb" x="968" y="412.4"/>
<use href="#min" x="976" y="410"/><use href="#max" x="987.8" y="410.2"/>
<path d="M469 396.4l-2 2 2 2M991.6 396.4l2 2-2 2" fill="none" stroke="#3a3a3a" stroke-width="1.2"/>
<!-- console scrollbars -->
<path d="M991.6 439l2-2 2 2M991.6 512.4l2 2 2-2" fill="none" stroke="#3a3a3a" stroke-width="1.2"/>
<path d="M257.6 520.8l-2.2 2.2 2.2 2.2M984 520.8l2.2 2.2-2.2 2.2" fill="none" stroke="#9a9a9a" stroke-width="0.9"/>
<!-- status seps -->
<g fill="#c8c8c8"><rect x="551" y="528" width="0.8" height="12"/><rect x="641" y="528" width="0.8" height="12"/><rect x="727.6" y="528" width="0.8" height="12"/></g>
<g fill="#c8c0a8"><rect x="813.6" y="530" width="1" height="1"/><rect x="813.6" y="532.2" width="1" height="1"/><rect x="813.6" y="534.4" width="1" height="1"/><rect x="813.6" y="536.6" width="1" height="1"/></g>
</svg>

<div class="a" style="left:251.5px;top:526.8px;width:747.5px;height:0.8px;background:#dcdcdc"></div>
<!-- STATUS -->
<div class="t" style="left:555.0px;top:529px;letter-spacing:0.191px">Writable</div>
<div class="t" style="left:645.0px;top:529px;letter-spacing:-0.039px">Smart Insert</div>
<div class="t" style="left:733.0px;top:529px;letter-spacing:-0.273px">1085 : 1 : 31003</div>
<!-- TASKBAR -->
<div class="a" id="task" style="left:0;top:540.3px;width:999px;height:21.7px;border-top:0.9px solid #e8eaec;background:#0c1d2f">
<div class="a" style="left:25px;top:0;width:150px;height:21px;background:#f1f3f5;border-top:1px solid #c9ccd0"></div>
<div class="t" style="left:46.0px;top:5.6px;color:#4a4a4a;font-size:7.9px;letter-spacing:-0.197px">Type here to search</div>
<div class="a" style="left:278px;top:0;width:24.6px;height:21px;background:#12395c"></div>
<div class="a" style="left:278px;top:19.6px;width:24.6px;height:1.4px;background:#76b9ed"></div>
<div class="a" style="left:229px;top:19.6px;width:20px;height:1.4px;background:#76b9ed"></div>
<div class="a" style="left:284px;top:4px;width:13.4px;height:13px;background:#2d9fe0;color:#fff;font-weight:bold;font-size:6.4px;line-height:13px;text-align:center;letter-spacing:-0.2px">IDE</div>
<div class="t" style="left:803.7px;top:5.9px;color:#fff;font-size:7.7px;letter-spacing:-0.764px">FTSE 100</div>
<div class="t" style="left:837.0px;top:5.9px;color:#f07070;font-size:7.7px;letter-spacing:-0.393px">-0.48%</div>
<div class="t" style="left:945.6px;top:0.6px;color:#fff;font-size:6.6px;letter-spacing:-0.363px">09:17</div>
<div class="t" style="left:938.3px;top:10.4px;color:#fff;font-size:6.6px;letter-spacing:-0.312px">02/07/2024</div>
<svg class="a" style="left:0;top:0" width="999" height="21" viewBox="0 541 999 21">
<g fill="#fff"><rect x="8" y="547.2" width="4" height="3.9"/><rect x="12.7" y="547.2" width="4.3" height="3.9"/><rect x="8" y="551.8" width="4" height="3.9"/><rect x="12.7" y="551.8" width="4.3" height="3.9"/></g>
<circle cx="37.6" cy="549" r="2.6" fill="none" stroke="#333" stroke-width="0.9"/><path d="M35.8 551l-4 4.2" stroke="#333" stroke-width="1"/>
<g fill="none" stroke="#e4e6e8" stroke-width="0.75"><rect x="184.2" y="548.6" width="5" height="5.2"/><path d="M183 547.2v8M190.6 547.2v2.4M190.6 552.8v2.4M191.9 550.4v1.6"/></g>
<circle cx="213.4" cy="551.4" r="5.8" fill="#1e88d8"/><path d="M208 549c2-5 10-4 11 1-2-2-6-2-7 1z" fill="#48d070"/><path d="M208 552c0 4 5 6 8 4-3 0-5-2-4-5z" fill="#1460b8"/><rect x="207.8" y="552.6" width="5.2" height="4" fill="#e88820"/>
<path d="M233.4 547h4l1 1.2h6.4v7.6h-11.4z" fill="#f4c030"/><rect x="233.4" y="549.6" width="11.4" height="6.2" fill="#f8d868"/><rect x="236" y="552.4" width="6.2" height="3.4" fill="#3a90e0"/>
<circle cx="264.4" cy="551.5" r="5.9" fill="#e03a2c"/><path d="M264.4 551.5l-5.1 2.95a5.9 5.9 0 0 0 7.6 2.4z" fill="#2aa048"/><path d="M264.4 551.5l2.5 5.35a5.9 5.9 0 0 0 3-7.9z" fill="#f8c820"/><circle cx="264.4" cy="551.5" r="2.7" fill="#fff"/><circle cx="264.4" cy="551.5" r="2.1" fill="#3a80e8"/>
<g fill="#e8502a"><rect x="786.6" y="552" width="1.4" height="4.8"/><rect x="789.2" y="553.4" width="1.4" height="3.4"/><rect x="791.8" y="554.6" width="1.4" height="2.2"/><rect x="794.4" y="555.6" width="1.4" height="1.2"/></g><path d="M787 546.6l5.4 4.6h4M794.4 548.8l2.4 2.4-2.4 2.4" fill="none" stroke="#e8502a" stroke-width="1.1"/>
<path d="M871.6 552.6l3.1-3 3.1 3" fill="none" stroke="#fff" stroke-width="0.9"/>
<rect x="883.6" y="549.5" width="7.2" height="4" rx="0.5" fill="#e8ecf0" stroke="#fff" stroke-width="0.6"/><rect x="891.2" y="550.6" width="0.9" height="1.8" fill="#fff"/>
<path d="M896.4 554.6l6.4-6.4v6.4z" fill="#8a949e"/><path d="M898 554.6a4.6 4.6 0 0 1 4.8-4.6M899.8 554.6a2.8 2.8 0 0 1 3-2.8" stroke="#0c1d2f" stroke-width="0.6" fill="none"/>
<path d="M908.6 550.2h1.6l2.2-2v6.8l-2.2-2h-1.6z" fill="none" stroke="#fff" stroke-width="0.7"/><path d="M914.6 550l3 3M917.6 550l-3 3" stroke="#fff" stroke-width="0.7"/>
<g fill="none" stroke="#fff" stroke-width="0.9"><circle cx="925" cy="553.4" r="1.9"/><circle cx="929.4" cy="549.6" r="1.9"/><path d="M926 552.6l2.4-2.2"/></g>
<path d="M977.4 547.2h8.6v6.2h-5.6l-1.6 1.8v-1.8h-1.4z" fill="#fff"/><path d="M979 549h5.4M979 550.8h5.4" stroke="#0c1d2f" stroke-width="0.5"/><circle cx="985.2" cy="555.6" r="3.1" fill="#1e6fd0"/>
<text x="985.2" y="557.4" font-family="Liberation Sans, sans-serif" font-size="5" font-weight="bold" fill="#fff" text-anchor="middle">1</text>
</svg>
</div>
</body></html>
